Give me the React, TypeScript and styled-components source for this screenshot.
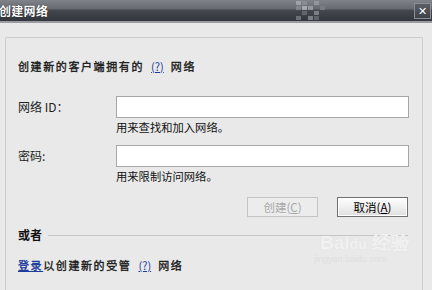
import { createGlobalStyle, styled } from 'styled-components'

const GlobalStyle = createGlobalStyle`
	html, body {
		margin: 0;
		padding: 0;
		background: #e9e9e9;
	}
	body {
		font-family: "Noto Sans CJK SC", "Liberation Sans", sans-serif;
	}
`

function Checker() {
	const cells = [
		[0, 0, '#a9acb2'], [6, 0, '#8e9198'], [18, 0, '#9a9da3'],
		[0, 5, '#8a8d93'], [6, 5, '#b5b8bd'], [12, 5, '#a0a3a9'], [24, 5, '#7e8188'],
		[6, 10, '#6c6f76'], [18, 10, '#8a8d93'],
		[0, 15, '#7a7d84'], [12, 15, '#8d9096'], [18, 15, '#6a6d74'],
	] as const
	return (
		<svg width="32" height="20" viewBox="0 0 32 20">
			{cells.map(([x, y, c], i) => (
				<rect key={i} x={x} y={y} width="5" height="4" fill={c} />
			))}
		</svg>
	)
}

function App() {
	return (
		<>
			<GlobalStyle />
			<Window>
				<TitleBar>
					<Title>创建网络</Title>
					<Deco>
						<Checker />
					</Deco>
					<CloseBtn>✕</CloseBtn>
				</TitleBar>
				<Body>
					<Panel>
						<Intro>
							创建新的客户端拥有的 <HelpLink>(?)</HelpLink> 网络
						</Intro>
						<FieldRow>
							<Label>网络 ID：</Label>
							<Field>
								<TextBox />
								<Hint>用来查找和加入网络。</Hint>
							</Field>
						</FieldRow>
						<FieldRow $gap={11}>
							<Label>密码:</Label>
							<Field>
								<TextBox type="password" />
								<Hint>用来限制访问网络。</Hint>
							</Field>
						</FieldRow>
						<Buttons>
							<Btn disabled>创建(<u>C</u>)</Btn>
							<Btn $primary>取消(<u>A</u>)</Btn>
						</Buttons>
						<OrRow>
							<OrLabel>或者</OrLabel>
							<OrLine />
						</OrRow>
						<Intro $top={16}>
							<LoginLink>登录</LoginLink>以创建新的受管 <HelpLink>(?)</HelpLink> 网络
						</Intro>
						<Watermark>
							Bai<b>du</b> 经验
							<small>jingyan.baidu.com</small>
						</Watermark>
					</Panel>
				</Body>
			</Window>
		</>
	)
}

export default App

const Window = styled.div`
	width: 432px;
	height: 290px;
	overflow: hidden;
	background: #e9e9e9;
	position: relative;
`
const TitleBar = styled.div`
	height: 21px;
	display: flex;
	align-items: center;
	background: linear-gradient(
		to bottom,
		#80838a 0px,
		#666970 9px,
		#45484f 10px,
		#34373e 20px
	);
	border-bottom: 2px solid #9a9ca0;
	position: relative;
`
const Title = styled.div`
	color: #ffffff;
	font-weight: bold;
	font-size: 12px;
	margin-left: -1px;
	letter-spacing: 0.3px;
	text-shadow: 0 0 1px #000;
`
const Deco = styled.div`
	margin-left: 248px;
	height: 20px;
	opacity: 0.8;
`
const CloseBtn = styled.div`
	position: absolute;
	right: 1px;
	top: 3px;
	width: 15px;
	height: 14px;
	border: 1px solid #8b8e94;
	background: linear-gradient(#5b5e65, #3e4148);
	color: #fff;
	font-size: 11px;
	font-weight: bold;
	display: flex;
	align-items: center;
	justify-content: center;
	font-family: "DejaVu Sans", sans-serif;
`
const Body = styled.div`
	padding: 14px 9px 0 5px;
`
const Panel = styled.div`
	height: 260px;
	border: 1px solid #cdcdcd;
	border-bottom: none;
	border-radius: 2px 2px 0 0;
	padding: 0 13px 0 12px;
	position: relative;
`
const Intro = styled.div<{ $top?: number }>`
	margin-top: ${(p) => p.$top ?? 21}px;
	font-size: 11px;
	line-height: 14px;
	letter-spacing: 1.6px;
	color: #1a1a1a;
	-webkit-text-stroke: 0.35px #1a1a1a;
`
const HelpLink = styled.span`
	color: #1a3a9e;
	-webkit-text-stroke: 0;
	text-decoration: underline;
	letter-spacing: 0;
	padding: 0 3px;
`
const LoginLink = styled.span`
	color: #1a3a9e;
	-webkit-text-stroke: 0.35px #1a3a9e;
	text-decoration: underline;
`
const FieldRow = styled.div<{ $gap?: number }>`
	display: flex;
	margin-top: ${(p) => p.$gap ?? 23}px;
`
const Label = styled.div`
	width: 98px;
	font-size: 12px;
	line-height: 22px;
	color: #222;
`
const Field = styled.div`
	flex: 1;
	display: flex;
	flex-direction: column;
`
const TextBox = styled.input`
	box-sizing: border-box;
	width: 293px;
	height: 22px;
	margin: 0;
	border: 1px solid #a7a7a7;
	background: #ffffff;
	outline: none;
`
const Hint = styled.div`
	margin-top: 2px;
	font-size: 11.3px;
	line-height: 14px;
	color: #111;
`
const Buttons = styled.div`
	display: flex;
	justify-content: flex-end;
	gap: 19px;
	margin-top: 14px;
	padding-right: 1px;
`
const Btn = styled.button<{ $primary?: boolean }>`
	box-sizing: border-box;
	width: 71px;
	height: 20px;
	padding: 0;
	font-family: "Noto Sans CJK SC", sans-serif;
	font-size: 11.5px;
	line-height: 16px;
	border: 1px solid ${(p) => (p.$primary ? '#707070' : '#c4c4c4')};
	background: ${(p) =>
		p.$primary
			? 'linear-gradient(#fdfdfd, #f0f0f0 50%, #dedede)'
			: '#ececec'};
	color: ${(p) => (p.$primary ? '#000' : '#a8a8a8')};
	box-shadow: ${(p) => (p.$primary ? 'inset 0 0 0 1px #fff' : 'none')};
	u {
		text-underline-offset: 1px;
	}
`
const OrRow = styled.div`
	display: flex;
	align-items: center;
	gap: 6px;
	margin-top: 11px;
	padding-right: 1px;
`
const OrLabel = styled.div`
	font-size: 12px;
	font-weight: bold;
	line-height: 14px;
	color: #111;
`
const OrLine = styled.div`
	flex: 1;
	height: 1px;
	background: #c6c6c6;
	margin-top: 1px;
`
const Watermark = styled.div`
	position: absolute;
	left: 314px;
	top: 196px;
	color: #f1f1f1;
	font-family: "Liberation Sans", sans-serif;
	font-size: 19px;
	font-weight: bold;
	line-height: 18px;
	text-shadow: 0 0 1px #dcdcdc;
	b {
		font-size: 14px;
	}
	small {
		display: block;
		font-size: 9px;
		font-weight: normal;
		line-height: 12px;
		margin-left: -6px;
		color: #e0e0e0;
		text-shadow: none;
	}
`
